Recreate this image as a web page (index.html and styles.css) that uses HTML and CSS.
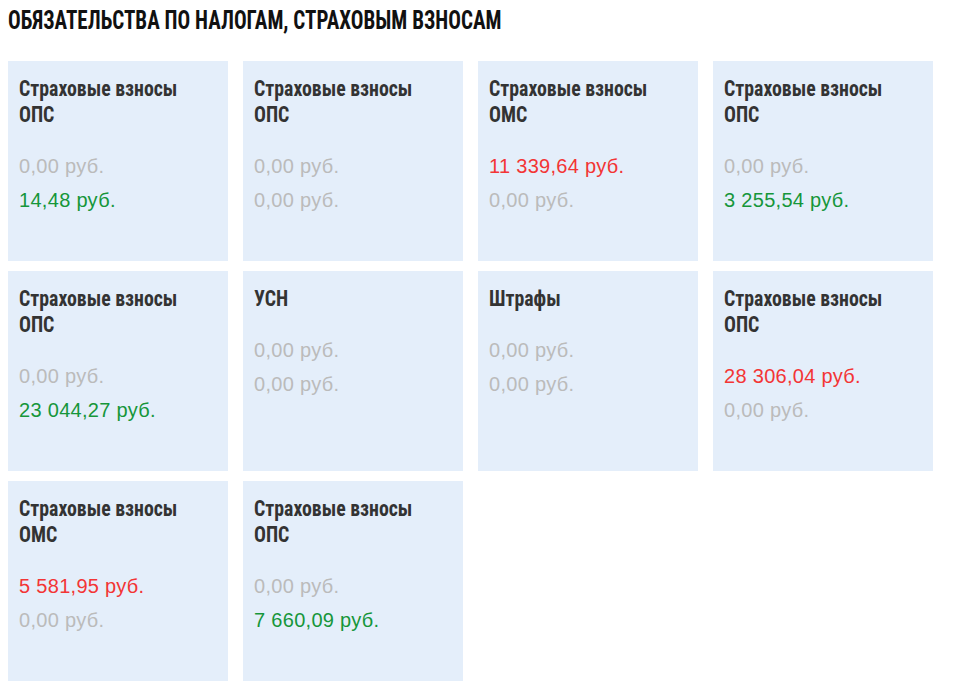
FILE: index.html
```html
<!DOCTYPE html>
<html lang="ru">
<head>
<meta charset="utf-8">
<link rel="stylesheet" href="styles.css">
</head>
<body>
<h1 class="title">ОБЯЗАТЕЛЬСТВА ПО НАЛОГАМ, СТРАХОВЫМ ВЗНОСАМ</h1>
<div class="grid">
  <div class="card"><div class="name">Страховые взносы<br>ОПС</div><div class="sum gray">0,00 руб.</div><div class="sum green">14,48 руб.</div></div>
  <div class="card"><div class="name">Страховые взносы<br>ОПС</div><div class="sum gray">0,00 руб.</div><div class="sum gray">0,00 руб.</div></div>
  <div class="card"><div class="name">Страховые взносы<br>ОМС</div><div class="sum red">11 339,64 руб.</div><div class="sum gray">0,00 руб.</div></div>
  <div class="card"><div class="name">Страховые взносы<br>ОПС</div><div class="sum gray">0,00 руб.</div><div class="sum green">3 255,54 руб.</div></div>
  <div class="card"><div class="name">Страховые взносы<br>ОПС</div><div class="sum gray">0,00 руб.</div><div class="sum green">23 044,27 руб.</div></div>
  <div class="card"><div class="name">УСН</div><div class="sum gray">0,00 руб.</div><div class="sum gray">0,00 руб.</div></div>
  <div class="card"><div class="name">Штрафы</div><div class="sum gray">0,00 руб.</div><div class="sum gray">0,00 руб.</div></div>
  <div class="card"><div class="name">Страховые взносы<br>ОПС</div><div class="sum red">28 306,04 руб.</div><div class="sum gray">0,00 руб.</div></div>
  <div class="card"><div class="name">Страховые взносы<br>ОМС</div><div class="sum red">5 581,95 руб.</div><div class="sum gray">0,00 руб.</div></div>
  <div class="card"><div class="name">Страховые взносы<br>ОПС</div><div class="sum gray">0,00 руб.</div><div class="sum green">7 660,09 руб.</div></div>
</div>
</body>
</html>
```
FILE: styles.css
```css
body {
  margin: 8px;
  background: #fff;
  font-family: "Liberation Sans", Arial, sans-serif;
}
.title {
  margin: -3px 0 26px;
  font-family: "Roboto Condensed", "Open Sans Condensed", sans-serif;
  font-weight: bold;
  font-size: 26px;
  line-height: 30px;
  color: #111;
  white-space: nowrap;
  transform: scaleX(0.81);
  transform-origin: left center;
}
.grid {
  display: grid;
  grid-template-columns: repeat(4, 220px);
  grid-auto-rows: 200px;
  column-gap: 15px;
  row-gap: 10px;
}
.card {
  background: #e4eefa;
  padding: 15px 11px 0;
  box-sizing: border-box;
}
.name {
  font-family: "Roboto Condensed", "Open Sans Condensed", sans-serif;
  font-weight: bold;
  font-size: 22px;
  line-height: 26px;
  color: #333;
  margin-bottom: 21px;
  white-space: nowrap;
  transform: scaleX(0.9);
  transform-origin: left center;
}
.sum {
  font-size: 20px;
  line-height: 34px;
  letter-spacing: 0.3px;
}
.gray { color: #bbb; }
.green { color: #16963a; }
.red { color: #f33535; }
```
